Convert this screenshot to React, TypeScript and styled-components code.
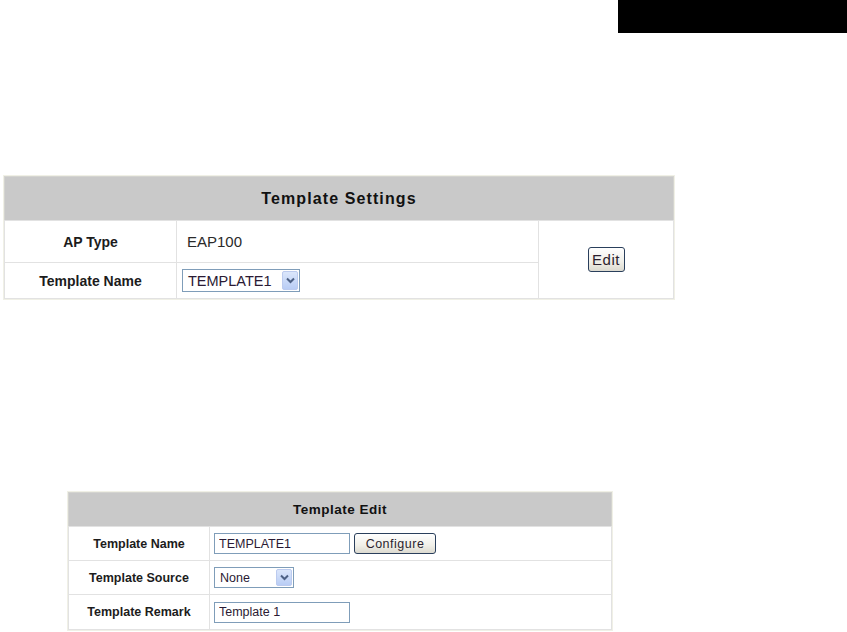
import React from 'react';
import styled, { createGlobalStyle } from 'styled-components';

const GlobalStyle = createGlobalStyle`
  body {
    margin: 0;
    background: #ffffff;
    font-family: "Liberation Sans", Arial, sans-serif;
    color: #222222;
  }
`;

const Page = styled.div`
  display: flex;
  flex-direction: column;
  width: 847px;
  height: 632px;
  overflow: hidden;
`;

const TopBar = styled.div`
  display: flex;
  justify-content: flex-end;
  height: 33px;
`;

const BlackTab = styled.div`
  width: 229px;
  background: #000000;
`;

type FormTableProps = { $top: number; $left: number; $width: number };

const FormTable = styled.table<FormTableProps>`
  margin: ${({ $top }) => $top}px 0 0 ${({ $left }) => $left}px;
  width: ${({ $width }) => $width}px;
  border-collapse: collapse;
  table-layout: fixed;
  border: 1px solid #d4d4d0;
  outline: 1px solid #f0f0e6;
`;

type HeadCellProps = { $size: number; $height: number; $spacing: number };

const HeadCell = styled.th<HeadCellProps>`
  height: ${({ $height }) => $height}px;
  padding: 0;
  background: #c9c9c9;
  font-size: ${({ $size }) => $size}px;
  font-weight: bold;
  letter-spacing: ${({ $spacing }) => $spacing}px;
  color: #111111;
  text-align: center;
`;

type LabelCellProps = { $size: number; $height: number };

const LabelCell = styled.td<LabelCellProps>`
  height: ${({ $height }) => $height}px;
  padding: 0;
  border: 1px solid #e2e2e2;
  font-size: ${({ $size }) => $size}px;
  font-weight: bold;
  color: #1c1c1c;
  text-align: center;
`;

type ValueCellProps = { $pad: number };

const ValueCell = styled.td<ValueCellProps>`
  padding: 0 0 0 ${({ $pad }) => $pad}px;
  border: 1px solid #e2e2e2;
`;

const ActionCell = styled.td`
  padding: 0;
  border: 1px solid #e2e2e2;
  text-align: center;
  vertical-align: middle;
`;

const PlainValue = styled.span`
  padding-left: 5px;
  font-size: 15px;
  color: #2a2a2a;
`;

const InlineRow = styled.div`
  display: flex;
  align-items: center;
  gap: 4px;
`;

type SelectProps = { $width: number; $height: number; $size: number };

const SelectBox = styled.div<SelectProps>`
  display: flex;
  align-items: center;
  justify-content: space-between;
  box-sizing: border-box;
  width: ${({ $width }) => $width}px;
  height: ${({ $height }) => $height}px;
  padding: 0 1px 0 5px;
  border: 1px solid #7f9db9;
  background: #ffffff;
  font-size: ${({ $size }) => $size}px;
  color: #2a1a33;
`;

const ArrowBox = styled.span`
  display: flex;
  align-items: center;
  justify-content: center;
  width: 16px;
  height: calc(100% - 2px);
  border-radius: 2px;
  background: linear-gradient(#dbe6fb, #b9cdf5);
  border: 1px solid #bccbef;
  box-sizing: border-box;
`;

type FieldProps = { $width: number };

const TextField = styled.input<FieldProps>`
  box-sizing: border-box;
  width: ${({ $width }) => $width}px;
  height: 21px;
  margin: 0;
  padding: 0 4px;
  border: 1px solid #7f9db9;
  font-family: "Liberation Sans", Arial, sans-serif;
  font-size: 12.5px;
  color: #2a1a33;
  outline: none;
`;

type ButtonProps = { $width: number; $height: number; $size: number };

const XpButton = styled.button<ButtonProps>`
  box-sizing: border-box;
  width: ${({ $width }) => $width}px;
  height: ${({ $height }) => $height}px;
  margin: 0;
  padding: 0;
  border: 1px solid #2a3f5c;
  border-radius: 3px;
  background: linear-gradient(#ffffff, #f0efe8 60%, #dcdad0);
  font-family: "Liberation Sans", Arial, sans-serif;
  font-size: ${({ $size }) => $size}px;
  letter-spacing: 0.5px;
  color: #2b1f2e;
`;

const Chevron = () => (
  <svg width="9" height="7" viewBox="0 0 9 7">
    <path d="M1 1.5 L4.5 5 L8 1.5" fill="none" stroke="#4d6185" strokeWidth="2" />
  </svg>
);

const TemplateSettings = () => (
  <FormTable $top={143} $left={4} $width={669}>
    <colgroup>
      <col style={{ width: 172 }} />
      <col style={{ width: 362 }} />
      <col style={{ width: 135 }} />
    </colgroup>
    <thead>
      <tr>
        <HeadCell colSpan={3} $size={16} $height={43} $spacing={1.1}>
          Template Settings
        </HeadCell>
      </tr>
    </thead>
    <tbody>
      <tr>
        <LabelCell $size={14} $height={41}>AP Type</LabelCell>
        <ValueCell $pad={5}>
          <PlainValue>EAP100</PlainValue>
        </ValueCell>
        <ActionCell rowSpan={2}>
          <XpButton $width={37} $height={25} $size={15}>Edit</XpButton>
        </ActionCell>
      </tr>
      <tr>
        <LabelCell $size={14} $height={35}>Template Name</LabelCell>
        <ValueCell $pad={5}>
          <SelectBox $width={118} $height={23} $size={14.5}>
            TEMPLATE1
            <ArrowBox>
              <Chevron />
            </ArrowBox>
          </SelectBox>
        </ValueCell>
      </tr>
    </tbody>
  </FormTable>
);

const TemplateEdit = () => (
  <FormTable $top={193} $left={68} $width={543}>
    <colgroup>
      <col style={{ width: 141 }} />
      <col style={{ width: 402 }} />
    </colgroup>
    <thead>
      <tr>
        <HeadCell colSpan={2} $size={13.5} $height={33} $spacing={0.5}>
          Template Edit
        </HeadCell>
      </tr>
    </thead>
    <tbody>
      <tr>
        <LabelCell $size={12.5} $height={33}>Template Name</LabelCell>
        <ValueCell $pad={4}>
          <InlineRow>
            <TextField $width={136} defaultValue="TEMPLATE1" />
            <XpButton $width={82} $height={21} $size={12.5}>Configure</XpButton>
          </InlineRow>
        </ValueCell>
      </tr>
      <tr>
        <LabelCell $size={12.5} $height={33}>Template Source</LabelCell>
        <ValueCell $pad={4}>
          <SelectBox $width={80} $height={21} $size={12.5}>
            None
            <ArrowBox>
              <Chevron />
            </ArrowBox>
          </SelectBox>
        </ValueCell>
      </tr>
      <tr>
        <LabelCell $size={12.5} $height={34}>Template Remark</LabelCell>
        <ValueCell $pad={4}>
          <TextField $width={136} defaultValue="Template 1" />
        </ValueCell>
      </tr>
    </tbody>
  </FormTable>
);

export default function App() {
  return (
    <Page>
      <GlobalStyle />
      <TopBar>
        <BlackTab />
      </TopBar>
      <TemplateSettings />
      <TemplateEdit />
    </Page>
  );
}
